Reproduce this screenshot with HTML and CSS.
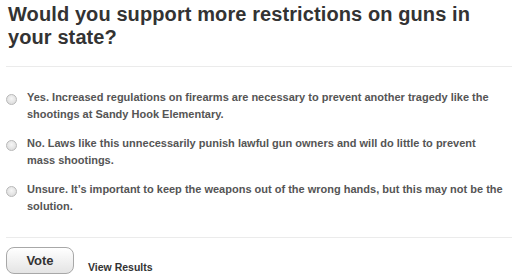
FILE: index.html
```html
<!DOCTYPE html>
<html>
<head>
<meta charset="utf-8">
<link rel="stylesheet" href="styles.css">
</head>
<body>
<div class="poll">
  <h1 class="question">Would you support more restrictions on guns in your state?</h1>
  <div class="rule"></div>
  <ul class="options">
    <li class="option"><span class="radio"></span><span class="label">Yes. Increased regulations on firearms are necessary to prevent another tragedy like the shootings at Sandy Hook Elementary.</span></li>
    <li class="option"><span class="radio"></span><span class="label">No. Laws like this unnecessarily punish lawful gun owners and will do little to prevent mass shootings.</span></li>
    <li class="option"><span class="radio"></span><span class="label">Unsure. It’s important to keep the weapons out of the wrong hands, but this may not be the solution.</span></li>
  </ul>
  <div class="rule"></div>
  <div class="actions">
    <button class="vote">Vote</button>
    <span class="results">View Results</span>
  </div>
</div>
</body>
</html>
```
FILE: styles.css
```css
html, body {
  margin: 0;
  padding: 0;
  background: #fff;
}
body {
  font-family: "Liberation Sans", Arial, sans-serif;
}
.poll {
  padding: 3px 2px 0 6px;
  width: 506px;
}
.question {
  margin: 0 0 0 2px;
  max-width: 490px;
  font-size: 20px;
  line-height: 23px;
  letter-spacing: 0.1px;
  font-weight: bold;
  color: #333;
}
.rule {
  height: 1px;
  background: #ebebeb;
  margin-top: 17px;
}
.options {
  list-style: none;
  margin: 22px 0 0 0;
  padding: 0;
}
.option {
  display: flex;
  align-items: flex-start;
  margin-bottom: 12px;
}
.option:last-child {
  margin-bottom: 0;
}
.radio {
  flex: none;
  box-sizing: border-box;
  width: 11px;
  height: 11px;
  border-radius: 50%;
  border: 1px solid #b8b8b8;
  background: radial-gradient(circle at 50% 40%, #f6f6f6, #d6d6d6);
  margin: 5px 10px 0 0;
}
.label {
  max-width: 476px;
  font-size: 11px;
  line-height: 17px;
  font-weight: bold;
  color: #555;
}
.actions {
  display: flex;
  align-items: flex-start;
}
.rule + .actions {
  margin-top: 9px;
}
.options + .rule {
  margin-top: 22px;
}
.vote {
  width: 68px;
  height: 27px;
  border: 1px solid #a8a8a8;
  border-radius: 8px;
  background: linear-gradient(#ffffff, #e4e4e4);
  font-family: "Liberation Sans", Arial, sans-serif;
  font-weight: bold;
  font-size: 13px;
  color: #333;
  padding: 0;
}
.results {
  margin: 14px 0 0 14px;
  font-size: 10.5px;
  line-height: 12px;
  font-weight: bold;
  color: #333;
}
```
